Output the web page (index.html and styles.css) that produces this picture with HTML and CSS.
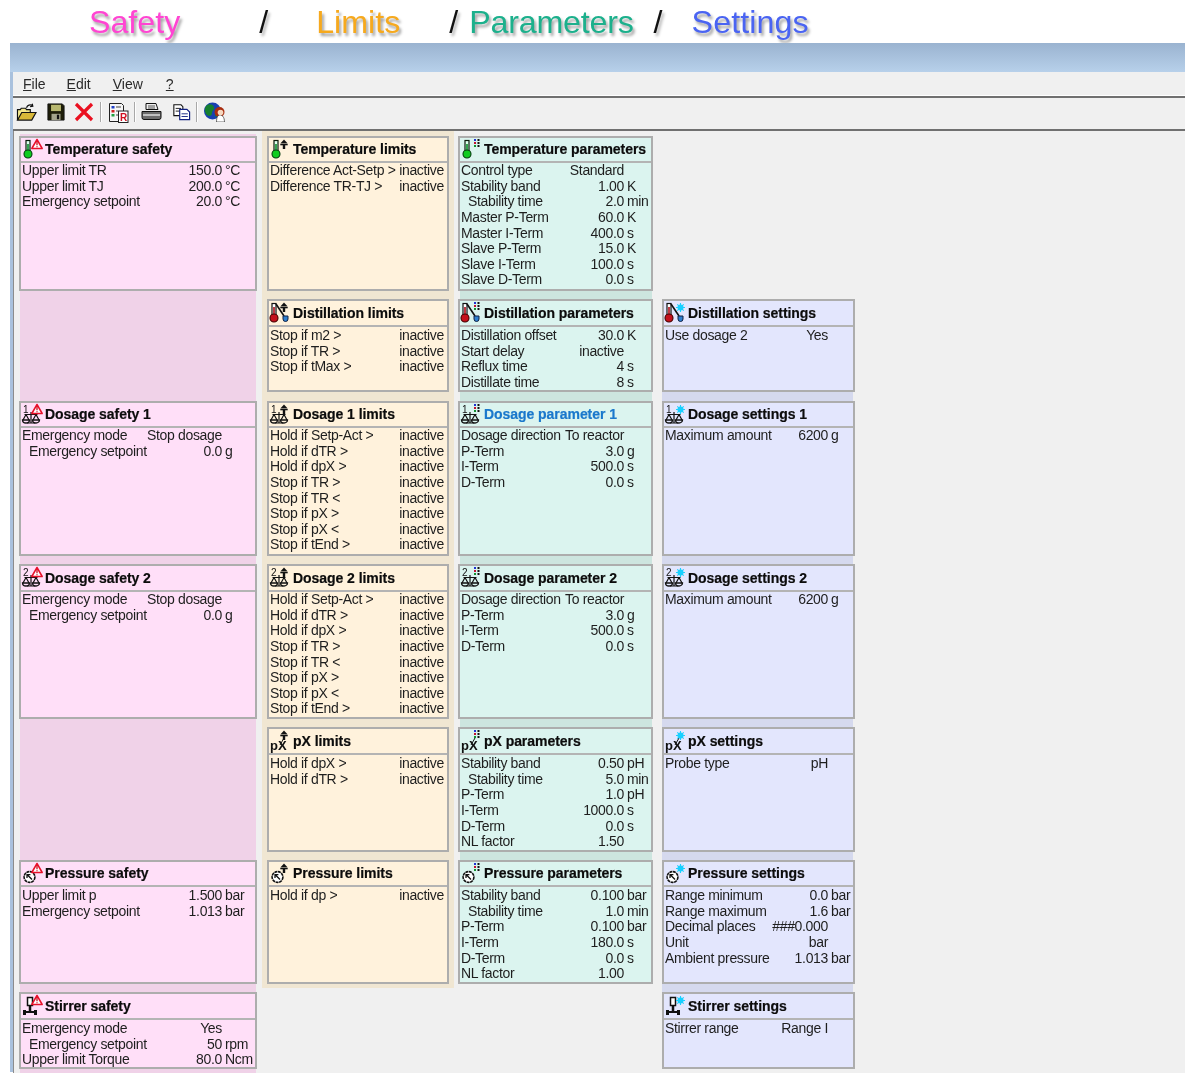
FILE: index.html
```html
<!DOCTYPE html>
<html lang="en">
<head>
<meta charset="utf-8">
<title>Safety / Limits / Parameters / Settings</title>
<link rel="stylesheet" href="styles.css">
</head>
<body>
<svg class="defs" aria-hidden="true">
  <defs>
    <g id="th"><rect x="5" y="2.5" width="4" height="11" fill="#dfe" stroke="#0a1a0a" stroke-width="1.200"/><rect x="6.200" y="6" width="1.600" height="8" fill="#0a8f2a"/><circle cx="7" cy="16" r="4" fill="#10cc20" stroke="#053d10" stroke-width="1.100"/></g>
    <g id="dist"><rect x="3" y="2.500" width="4" height="12" fill="#fff" stroke="#111" stroke-width="1.200"/><rect x="4.200" y="6" width="1.600" height="9" fill="#b00c18"/><circle cx="5" cy="17" r="4" fill="#c4101c" stroke="#400" stroke-width="1.100"/><path d="M7 3 L15 15" stroke="#111" fill="none" stroke-width="1.600"/><path d="M14 15 h5 v3 a2.500 2.500 0 0 1 -5 0z" fill="#2e7fd0" stroke="#124"/></g>
    <g id="scale"><text x="2" y="10" class="num">1</text><path d="M10 9v11M3.500 11.500h13M6 20h8M5 11.500L2 17M5 11.500L8 17M15 11.500L12 17M15 11.500L18 17" stroke="#111" fill="none" stroke-width="1.200"/><path d="M1.500 17a3.500 3 0 0 0 7 0zM11.500 17a3.500 3 0 0 0 7 0z" fill="none" stroke="#111" stroke-width="1.300"/></g>
    <g id="scale2"><text x="2" y="10" class="num">2</text><path d="M10 9v11M3.500 11.500h13M6 20h8M5 11.500L2 17M5 11.500L8 17M15 11.500L12 17M15 11.500L18 17" stroke="#111" fill="none" stroke-width="1.200"/><path d="M1.500 17a3.500 3 0 0 0 7 0zM11.500 17a3.500 3 0 0 0 7 0z" fill="none" stroke="#111" stroke-width="1.300"/></g>
    <g id="gauge"><circle cx="8.500" cy="15" r="5.400" fill="#fff" stroke="#111" stroke-width="1.600" stroke-dasharray="3 .6"/><path d="M11 17.500L6.500 13M6 16v-3.400h3.400" stroke="#111" fill="none" stroke-width="1.300"/></g>
    <g id="stir"><rect x="6.500" y="3.500" width="5" height="8" fill="#fff" stroke="#111" stroke-width="1.500"/><path d="M9 11.500v6" stroke="#111" stroke-width="2.500"/><path d="M2 18h14" stroke="#111" stroke-width="2"/><rect x="2" y="16" width="3" height="5" fill="#111"/><rect x="13" y="16" width="3" height="5" fill="#111"/></g>
    <g id="px"><text x="1" y="21" class="pxt">pX</text><path d="M11 16L15 9" stroke="#111" fill="none"/></g>
    <g id="warn"><path d="M16 1.500L21.200 10.500H10.800Z" fill="#fff" stroke="#e8102a" stroke-width="1.500" stroke-linejoin="round"/><path d="M16 4v3.200M16 8.200v1" stroke="#c81020" stroke-width="1.300"/></g>
    <g id="lim"><path d="M15 1.500L18.700 5.500H11.300Z" fill="#111"/><rect x="11.300" y="6" width="7.400" height="1.300" fill="#111"/><path d="M13.800 7h2.400v4h-2.400z" fill="#111"/></g>
    <g id="par"><rect x="14" y="1" width="2" height="2" fill="#2030d0"/><rect x="14" y="4" width="2" height="2" fill="#c01030"/><rect x="14" y="7" width="2" height="2" fill="#109030"/><rect x="17.500" y="1" width="2" height="2" fill="#111"/><rect x="17.500" y="4" width="2" height="2" fill="#111"/><rect x="17.500" y="7" width="2" height="2" fill="#111"/></g>
    <g id="set"><circle cx="16.500" cy="6.500" r="3" fill="#18d0ff"/><path d="M16.500 2v9M12 6.500h9M13.300 3.300l6.400 6.400M19.700 3.300l-6.400 6.400" stroke="#18d0ff" stroke-width="1.100"/></g>
  </defs>
</svg>

<header class="headline">
  <span class="hl safety">Safety</span>
  <span class="sl s-a">/</span>
  <span class="hl limits">Limits</span>
  <span class="sl s-b">/</span>
  <span class="hl params">Parameters</span>
  <span class="sl s-c">/</span>
  <span class="hl settings">Settings</span>
</header>

<main class="win">
  <div class="titlebar"></div>
  <nav class="menu">
    <span class="mi m-file"><u>F</u>ile</span>
    <span class="mi m-edit"><u>E</u>dit</span>
    <span class="mi m-view"><u>V</u>iew</span>
    <span class="mi m-help"><u>?</u></span>
  </nav>
  <div class="toolbar">
    <svg class="tool t-open" viewBox="0 0 22 20"><path d="M11 5c1-3 4-3.500 6-2.500M17 .8l.6 2.600-2.800.4" fill="none" stroke="#111" stroke-width="1.300"/><path d="M1.500 18V7h3l1-1.500H10L11 7h4v3" fill="#f4e88c" stroke="#111" stroke-width="1.200"/><path d="M1.500 18L6 10h15l-4.500 8z" fill="#d8b838" stroke="#111" stroke-width="1.200"/></svg>
    <svg class="tool t-save" viewBox="0 0 20 20"><path d="M1 1h16l2 2v16H1z" fill="#1e1e08" stroke="#111"/><rect x="4.500" y="2" width="11" height="7" fill="#b8b870"/><rect x="5" y="12" width="10" height="7" fill="#a4a48c"/><rect x="11" y="13" width="2.500" height="5" fill="#111"/></svg>
    <svg class="tool t-del" viewBox="0 0 20 20"><path d="M2 2L18 18M18 2L2 18" stroke="#ea1020" stroke-width="3.200"/></svg>
    <i class="sep s1"></i>
    <svg class="tool t-rep" viewBox="0 0 21 21"><path d="M1.500 1.500h12l2 2v16h-14z" fill="#f6f6f6" stroke="#222"/><rect x="3.500" y="4" width="3" height="2.500" fill="#2040c8"/><rect x="3.500" y="8" width="3" height="2.500" fill="#d02020"/><rect x="3.500" y="12" width="3" height="2.500" fill="#20a040"/><path d="M8 5h5M8 9h2M8 13h2" stroke="#444"/><rect x="10.500" y="9" width="9.500" height="11.500" fill="#fff" stroke="#222"/><text x="12" y="19" class="rt">R</text></svg>
    <i class="sep s2"></i>
    <svg class="tool t-print" viewBox="0 0 21 20"><path d="M5 1.500h10l2 6H5z" fill="#eee" stroke="#111"/><path d="M1 9.500h19v6a2 2 0 0 1-2 2H3a2 2 0 0 1-2-2z" fill="#6c6c6c" stroke="#111"/><path d="M2 13h17" stroke="#ddd" stroke-width="1.500"/><path d="M7 4h7M7 6h7" stroke="#555"/></svg>
    <svg class="tool t-copy" viewBox="0 0 20 20"><path d="M1.500 2h8l2 2v10h-10z" fill="#fff" stroke="#111" stroke-width="1.200"/><path d="M3.500 6h6M3.500 9h6" stroke="#111"/><path d="M8 7h8l3 3v8.500H8z" fill="#fff" stroke="#102080" stroke-width="1.300"/><path d="M10 12h7M10 15h7" stroke="#102080"/></svg>
    <i class="sep s3"></i>
    <svg class="tool t-web" viewBox="0 0 21 20"><circle cx="8.500" cy="9" r="8.500" fill="#1840b0"/><path d="M2 4c3-3 7-2 8 1s-2 3-2 6-3 4-5 2-3-6-1-9zM11 11c2-1 4 0 3 2s-2 2-3 1z" fill="#168030"/><circle cx="15.500" cy="10" r="5" fill="#a82c0e"/><path d="M12.500 20c0-5 1.500-7 3.500-7s4.500 2 4.500 7z" fill="#fff" stroke="#333" stroke-width=".7"/><circle cx="16.500" cy="10.500" r="2.800" fill="#f6d8c0"/></svg>
  </div>

  <section class="board">
    <div class="strip sp1"></div>
    <div class="strip sp2"></div>
    <div class="strip sp3"></div>
    <div class="strip sp4"></div>

    <!-- Row 1 -->
    <article class="card c1 r1">
      <div class="hd"><svg class="ico" viewBox="0 0 24 22"><use href="#th"/><use href="#warn"/></svg><h2>Temperature safety</h2></div>
      <div class="bd">
        <div class="row"><span>Upper limit TR</span><span class="v">150.0</span><span class="u">°C</span></div>
        <div class="row"><span>Upper limit TJ</span><span class="v">200.0</span><span class="u">°C</span></div>
        <div class="row"><span>Emergency setpoint</span><span class="v">20.0</span><span class="u">°C</span></div>
      </div>
    </article>
    <article class="card c2 r1">
      <div class="hd"><svg class="ico" viewBox="0 0 24 22"><use href="#th"/><use href="#lim"/></svg><h2>Temperature limits</h2></div>
      <div class="bd">
        <div class="row"><span>Difference Act-Setp &gt;</span><span class="v">inactive</span><span class="u"></span></div>
        <div class="row"><span>Difference TR-TJ &gt;</span><span class="v">inactive</span><span class="u"></span></div>
      </div>
    </article>
    <article class="card c3 r1">
      <div class="hd"><svg class="ico" viewBox="0 0 24 22"><use href="#th"/><use href="#par"/></svg><h2>Temperature parameters</h2></div>
      <div class="bd">
        <div class="row"><span>Control type</span><span class="v">Standard</span><span class="u"></span></div>
        <div class="row"><span>Stability band</span><span class="v">1.00</span><span class="u">K</span></div>
        <div class="row ind"><span>Stability time</span><span class="v">2.0</span><span class="u">min</span></div>
        <div class="row"><span>Master P-Term</span><span class="v">60.0</span><span class="u">K</span></div>
        <div class="row"><span>Master I-Term</span><span class="v">400.0</span><span class="u">s</span></div>
        <div class="row"><span>Slave P-Term</span><span class="v">15.0</span><span class="u">K</span></div>
        <div class="row"><span>Slave I-Term</span><span class="v">100.0</span><span class="u">s</span></div>
        <div class="row"><span>Slave D-Term</span><span class="v">0.0</span><span class="u">s</span></div>
      </div>
    </article>

    <!-- Row 2 -->
    <article class="card c2 r2">
      <div class="hd"><svg class="ico" viewBox="0 0 24 22"><use href="#dist"/><use href="#lim"/></svg><h2>Distillation limits</h2></div>
      <div class="bd">
        <div class="row"><span>Stop if m2 &gt;</span><span class="v">inactive</span><span class="u"></span></div>
        <div class="row"><span>Stop if TR &gt;</span><span class="v">inactive</span><span class="u"></span></div>
        <div class="row"><span>Stop if tMax &gt;</span><span class="v">inactive</span><span class="u"></span></div>
      </div>
    </article>
    <article class="card c3 r2">
      <div class="hd"><svg class="ico" viewBox="0 0 24 22"><use href="#dist"/><use href="#par"/></svg><h2>Distillation parameters</h2></div>
      <div class="bd">
        <div class="row"><span>Distillation offset</span><span class="v">30.0</span><span class="u">K</span></div>
        <div class="row"><span>Start delay</span><span class="v">inactive</span><span class="u"></span></div>
        <div class="row"><span>Reflux time</span><span class="v">4</span><span class="u">s</span></div>
        <div class="row"><span>Distillate time</span><span class="v">8</span><span class="u">s</span></div>
      </div>
    </article>
    <article class="card c4 r2">
      <div class="hd"><svg class="ico" viewBox="0 0 24 22"><use href="#dist"/><use href="#set"/></svg><h2>Distillation settings</h2></div>
      <div class="bd">
        <div class="row"><span>Use dosage 2</span><span class="v">Yes</span><span class="u"></span></div>
      </div>
    </article>

    <!-- Row 3 -->
    <article class="card c1 r3">
      <div class="hd"><svg class="ico" viewBox="0 0 24 22"><use href="#scale"/><use href="#warn"/></svg><h2>Dosage safety 1</h2></div>
      <div class="bd">
        <div class="row"><span>Emergency mode</span><span class="v">Stop dosage</span><span class="u"></span></div>
        <div class="row ind"><span>Emergency setpoint</span><span class="v">0.0</span><span class="u">g</span></div>
      </div>
    </article>
    <article class="card c2 r3">
      <div class="hd"><svg class="ico" viewBox="0 0 24 22"><use href="#scale"/><use href="#lim"/></svg><h2>Dosage 1 limits</h2></div>
      <div class="bd">
        <div class="row"><span>Hold if Setp-Act &gt;</span><span class="v">inactive</span><span class="u"></span></div>
        <div class="row"><span>Hold if dTR &gt;</span><span class="v">inactive</span><span class="u"></span></div>
        <div class="row"><span>Hold if dpX &gt;</span><span class="v">inactive</span><span class="u"></span></div>
        <div class="row"><span>Stop if TR &gt;</span><span class="v">inactive</span><span class="u"></span></div>
        <div class="row"><span>Stop if TR &lt;</span><span class="v">inactive</span><span class="u"></span></div>
        <div class="row"><span>Stop if pX &gt;</span><span class="v">inactive</span><span class="u"></span></div>
        <div class="row"><span>Stop if pX &lt;</span><span class="v">inactive</span><span class="u"></span></div>
        <div class="row"><span>Stop if tEnd &gt;</span><span class="v">inactive</span><span class="u"></span></div>
      </div>
    </article>
    <article class="card c3 r3">
      <div class="hd"><svg class="ico" viewBox="0 0 24 22"><use href="#scale"/><use href="#par"/></svg><h2 class="link">Dosage parameter 1</h2></div>
      <div class="bd">
        <div class="row"><span>Dosage direction</span><span class="v">To reactor</span><span class="u"></span></div>
        <div class="row"><span>P-Term</span><span class="v">3.0</span><span class="u">g</span></div>
        <div class="row"><span>I-Term</span><span class="v">500.0</span><span class="u">s</span></div>
        <div class="row"><span>D-Term</span><span class="v">0.0</span><span class="u">s</span></div>
      </div>
    </article>
    <article class="card c4 r3">
      <div class="hd"><svg class="ico" viewBox="0 0 24 22"><use href="#scale"/><use href="#set"/></svg><h2>Dosage settings 1</h2></div>
      <div class="bd">
        <div class="row"><span>Maximum amount</span><span class="v">6200</span><span class="u">g</span></div>
      </div>
    </article>

    <!-- Row 4 -->
    <article class="card c1 r4">
      <div class="hd"><svg class="ico" viewBox="0 0 24 22"><use href="#scale2"/><use href="#warn"/></svg><h2>Dosage safety 2</h2></div>
      <div class="bd">
        <div class="row"><span>Emergency mode</span><span class="v">Stop dosage</span><span class="u"></span></div>
        <div class="row ind"><span>Emergency setpoint</span><span class="v">0.0</span><span class="u">g</span></div>
      </div>
    </article>
    <article class="card c2 r4">
      <div class="hd"><svg class="ico" viewBox="0 0 24 22"><use href="#scale2"/><use href="#lim"/></svg><h2>Dosage 2 limits</h2></div>
      <div class="bd">
        <div class="row"><span>Hold if Setp-Act &gt;</span><span class="v">inactive</span><span class="u"></span></div>
        <div class="row"><span>Hold if dTR &gt;</span><span class="v">inactive</span><span class="u"></span></div>
        <div class="row"><span>Hold if dpX &gt;</span><span class="v">inactive</span><span class="u"></span></div>
        <div class="row"><span>Stop if TR &gt;</span><span class="v">inactive</span><span class="u"></span></div>
        <div class="row"><span>Stop if TR &lt;</span><span class="v">inactive</span><span class="u"></span></div>
        <div class="row"><span>Stop if pX &gt;</span><span class="v">inactive</span><span class="u"></span></div>
        <div class="row"><span>Stop if pX &lt;</span><span class="v">inactive</span><span class="u"></span></div>
        <div class="row"><span>Stop if tEnd &gt;</span><span class="v">inactive</span><span class="u"></span></div>
      </div>
    </article>
    <article class="card c3 r4">
      <div class="hd"><svg class="ico" viewBox="0 0 24 22"><use href="#scale2"/><use href="#par"/></svg><h2>Dosage parameter 2</h2></div>
      <div class="bd">
        <div class="row"><span>Dosage direction</span><span class="v">To reactor</span><span class="u"></span></div>
        <div class="row"><span>P-Term</span><span class="v">3.0</span><span class="u">g</span></div>
        <div class="row"><span>I-Term</span><span class="v">500.0</span><span class="u">s</span></div>
        <div class="row"><span>D-Term</span><span class="v">0.0</span><span class="u">s</span></div>
      </div>
    </article>
    <article class="card c4 r4">
      <div class="hd"><svg class="ico" viewBox="0 0 24 22"><use href="#scale2"/><use href="#set"/></svg><h2>Dosage settings 2</h2></div>
      <div class="bd">
        <div class="row"><span>Maximum amount</span><span class="v">6200</span><span class="u">g</span></div>
      </div>
    </article>

    <!-- Row 5 -->
    <article class="card c2 r5">
      <div class="hd"><svg class="ico" viewBox="0 0 24 22"><use href="#px"/><use href="#lim"/></svg><h2>pX limits</h2></div>
      <div class="bd">
        <div class="row"><span>Hold if dpX &gt;</span><span class="v">inactive</span><span class="u"></span></div>
        <div class="row"><span>Hold if dTR &gt;</span><span class="v">inactive</span><span class="u"></span></div>
      </div>
    </article>
    <article class="card c3 r5">
      <div class="hd"><svg class="ico" viewBox="0 0 24 22"><use href="#px"/><use href="#par"/></svg><h2>pX parameters</h2></div>
      <div class="bd">
        <div class="row"><span>Stability band</span><span class="v">0.50</span><span class="u">pH</span></div>
        <div class="row ind"><span>Stability time</span><span class="v">5.0</span><span class="u">min</span></div>
        <div class="row"><span>P-Term</span><span class="v">1.0</span><span class="u">pH</span></div>
        <div class="row"><span>I-Term</span><span class="v">1000.0</span><span class="u">s</span></div>
        <div class="row"><span>D-Term</span><span class="v">0.0</span><span class="u">s</span></div>
        <div class="row"><span>NL factor</span><span class="v">1.50</span><span class="u"></span></div>
      </div>
    </article>
    <article class="card c4 r5">
      <div class="hd"><svg class="ico" viewBox="0 0 24 22"><use href="#px"/><use href="#set"/></svg><h2>pX settings</h2></div>
      <div class="bd">
        <div class="row"><span>Probe type</span><span class="v">pH</span><span class="u"></span></div>
      </div>
    </article>

    <!-- Row 6 -->
    <article class="card c1 r6">
      <div class="hd"><svg class="ico" viewBox="0 0 24 22"><use href="#gauge"/><use href="#warn"/></svg><h2>Pressure safety</h2></div>
      <div class="bd">
        <div class="row"><span>Upper limit p</span><span class="v">1.500</span><span class="u">bar</span></div>
        <div class="row"><span>Emergency setpoint</span><span class="v">1.013</span><span class="u">bar</span></div>
      </div>
    </article>
    <article class="card c2 r6">
      <div class="hd"><svg class="ico" viewBox="0 0 24 22"><use href="#gauge"/><use href="#lim"/></svg><h2>Pressure limits</h2></div>
      <div class="bd">
        <div class="row"><span>Hold if dp &gt;</span><span class="v">inactive</span><span class="u"></span></div>
      </div>
    </article>
    <article class="card c3 r6">
      <div class="hd"><svg class="ico" viewBox="0 0 24 22"><use href="#gauge"/><use href="#par"/></svg><h2>Pressure parameters</h2></div>
      <div class="bd">
        <div class="row"><span>Stability band</span><span class="v">0.100</span><span class="u">bar</span></div>
        <div class="row ind"><span>Stability time</span><span class="v">1.0</span><span class="u">min</span></div>
        <div class="row"><span>P-Term</span><span class="v">0.100</span><span class="u">bar</span></div>
        <div class="row"><span>I-Term</span><span class="v">180.0</span><span class="u">s</span></div>
        <div class="row"><span>D-Term</span><span class="v">0.0</span><span class="u">s</span></div>
        <div class="row"><span>NL factor</span><span class="v">1.00</span><span class="u"></span></div>
      </div>
    </article>
    <article class="card c4 r6">
      <div class="hd"><svg class="ico" viewBox="0 0 24 22"><use href="#gauge"/><use href="#set"/></svg><h2>Pressure settings</h2></div>
      <div class="bd">
        <div class="row"><span>Range minimum</span><span class="v">0.0</span><span class="u">bar</span></div>
        <div class="row"><span>Range maximum</span><span class="v">1.6</span><span class="u">bar</span></div>
        <div class="row"><span>Decimal places</span><span class="v">###0.000</span><span class="u"></span></div>
        <div class="row"><span>Unit</span><span class="v">bar</span><span class="u"></span></div>
        <div class="row"><span>Ambient pressure</span><span class="v">1.013</span><span class="u">bar</span></div>
      </div>
    </article>

    <!-- Row 7 -->
    <article class="card c1 r7">
      <div class="hd"><svg class="ico" viewBox="0 0 24 22"><use href="#stir"/><use href="#warn"/></svg><h2>Stirrer safety</h2></div>
      <div class="bd">
        <div class="row"><span>Emergency mode</span><span class="v">Yes</span><span class="u"></span></div>
        <div class="row ind"><span>Emergency setpoint</span><span class="v">50</span><span class="u">rpm</span></div>
        <div class="row"><span>Upper limit Torque</span><span class="v">80.0</span><span class="u">Ncm</span></div>
      </div>
    </article>
    <article class="card c4 r7">
      <div class="hd"><svg class="ico" viewBox="0 0 24 22"><use href="#stir"/><use href="#set"/></svg><h2>Stirrer settings</h2></div>
      <div class="bd">
        <div class="row"><span>Stirrer range</span><span class="v">Range I</span><span class="u"></span></div>
      </div>
    </article>
  </section>
</main>
</body>
</html>
```
FILE: styles.css
```css
* { box-sizing: border-box; }
html, body { margin: 0; padding: 0; background: #fff; }
body { font-family: "Liberation Sans", Arial, sans-serif; color: #1e1e1e; width: 1196px; height: 1078px; overflow: hidden; }

.defs { position: absolute; width: 0; height: 0; }
.num { font: 10px "Liberation Sans", sans-serif; fill: #111; }
.pxt { font: bold 13px "Liberation Sans", sans-serif; fill: #111; }
.rt { font: bold 10px "Liberation Sans", sans-serif; fill: #d01020; }

/* Headline */
.headline { height: 43px; display: flex; align-items: flex-start; padding-left: 89px; font-size: 32.200px; line-height: 44px; filter: blur(.4px); }
.hl { text-shadow: 2px 3px 3px rgba(0,0,0,.38); }
.sl { color: #111; text-shadow: 2px 3px 3px rgba(0,0,0,.3); }
.safety { color: #ff45d2; }
.limits { color: #f6a91e; }
.params { color: #1cb08c; letter-spacing: -.2px; }
.settings { color: #4a64f2; letter-spacing: .1px; }
.s-a { margin-left: 79px; }
.limits { margin-left: 48px; }
.s-b { margin-left: 49px; }
.params { margin-left: 11px; }
.s-c { margin-left: 20px; }
.settings { margin-left: 29px; }

/* Window */
.win { margin-left: 10px; width: 1175px; height: 1029px; display: flex; flex-direction: column; border-left: 3px solid #a9c1dd; background: #f0f0f0; filter: blur(.3px); }
.titlebar { flex: 0 0 29px; margin-left: -3px; background: linear-gradient(#9ab3d0, #b7d0ea); }
.menu { flex: 0 0 25px; display: flex; border-bottom: 2px solid #707070; box-shadow: inset 0 -1px #fff; font-size: 14px; line-height: 24px; }
.mi { color: #2a2a2a; }
.m-file { margin-left: 10px; }
.m-edit { margin-left: 21px; }
.m-view { margin-left: 22px; }
.m-help { margin-left: 23px; }

.toolbar { flex: 0 0 33px; display: flex; align-items: center; border-bottom: 2px solid #707070; padding-bottom: 3px; }
.tool { flex: none; display: block; }
.t-open { width: 21px; height: 19px; margin-left: 3px; }
.t-save { width: 18px; height: 18px; margin-left: 10px; }
.t-del { width: 20px; height: 20px; margin-left: 9px; }
.sep { flex: none; width: 1px; height: 20px; background: #a8a8a8; box-shadow: 1px 0 #fff; }
.s1 { margin-left: 6px; }
.t-rep { width: 21px; height: 21px; margin-left: 7px; }
.s2 { margin-left: 5px; }
.t-print { width: 21px; height: 20px; margin-left: 6px; }
.t-copy { width: 19px; height: 18px; margin-left: 10px; }
.s3 { margin-left: 5px; }
.t-web { width: 21px; height: 20px; margin-left: 7px; }

/* Board */
.board { flex: 1; display: grid; grid-template-columns: 248px 191px 204px 193px; grid-template-rows: 163px 102px 163px 163px 133px 132px 81px; padding: 5px 0 0 5px; border-left: 1px solid #8c8c8c; background: #f0f0f0; }

.strip { width: 192px; }
.sp1 { grid-column: 1; grid-row: 1 / 8; width: 236px; margin: -2px 0 0 1px; background: #f0d2e8; }
.sp2 { grid-column: 2; grid-row: 1 / 7; margin: -5px 0 4px -5px; background: #f0e6d2; }
.sp3 { grid-column: 3; grid-row: 2 / 7; margin: -9px 0 8px 2px; background: #cde5df; }
.sp4 { grid-column: 4; grid-row: 3 / 7; width: 191px; margin: -10px 0 -1px; background: #d5d9ee; }

/* Cards */
.card { display: flex; flex-direction: column; margin-bottom: 8px; border: 2px solid #adadad; overflow: hidden; }
.c1 { grid-column: 1; width: 238px; background: #ffdff8; --uw: 33px; }
.c2 { grid-column: 2; width: 182px; background: #fff2dc; --uw: 1px; }
.c3 { grid-column: 3; width: 195px; background: #dbf4ef; --uw: 27px; }
.c4 { grid-column: 4; width: 193px; background: #e3e6fd; --uw: 25px; }
.r1 { grid-row: 1; }
.r2 { grid-row: 2; margin-bottom: 9px; }
.r3 { grid-row: 3; }
.r4 { grid-row: 4; }
.r5 { grid-row: 5; }
.r6 { grid-row: 6; }
.r7 { grid-row: 7; margin-bottom: 4px; }

.hd { flex: 0 0 25px; display: flex; align-items: flex-start; border-bottom: 2px solid #b4b4b4; }
.ico { flex: none; width: 24px; height: 22px; overflow: visible; }
.hd h2 { margin: 0; font-size: 14px; font-weight: 700; line-height: 23px; color: #0c0c0c; white-space: nowrap; letter-spacing: -.05px; -webkit-text-stroke: .2px #0c0c0c; }
.hd h2.link { color: #1a78cc; -webkit-text-stroke-color: #1a78cc; }
.r2 h2, .r4 h2, .r5 h2, .r7 h2 { padding-top: 1px; }

.bd { padding: 0 0 0 1px; font-size: 14px; letter-spacing: -.33px; line-height: 15.620px; }
.r2 .bd, .r5 .bd, .r6 .bd, .r7 .bd { padding-top: 1px; }
.row { display: flex; white-space: nowrap; }
.row.ind > span:first-child { padding-left: 7px; }
.v { margin-left: auto; }
.u { flex: 0 0 var(--uw); padding-left: 3px; }
```
